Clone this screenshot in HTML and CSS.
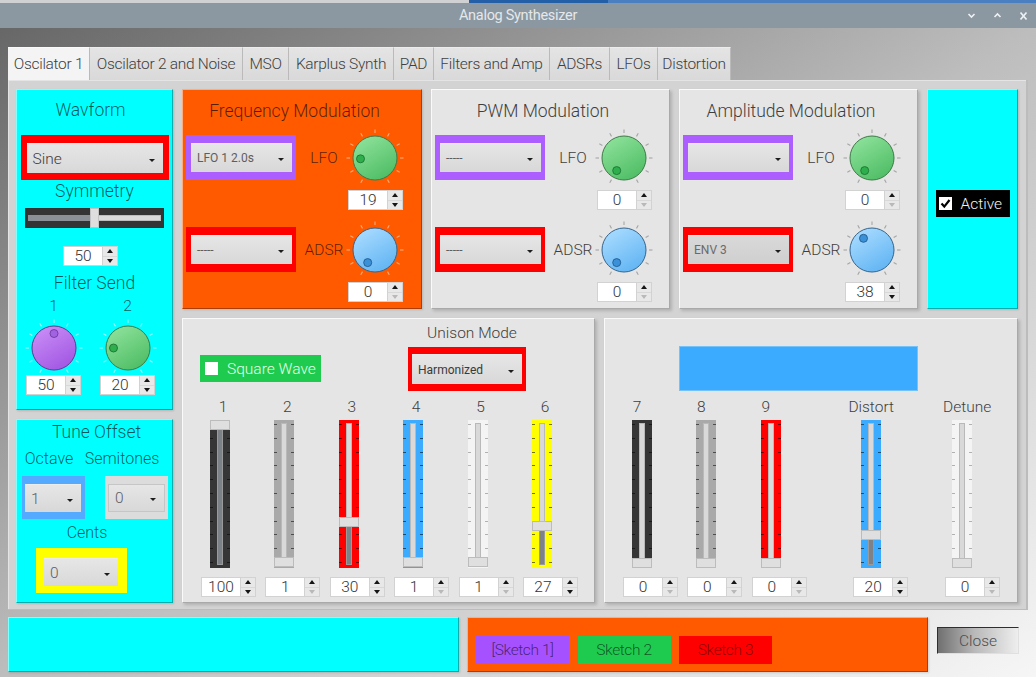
FILE: index.html
```html
<!DOCTYPE html>
<html lang="en">
<head>
<meta charset="utf-8">
<title>Analog Synthesizer</title>
<link rel="stylesheet" href="styles.css">
</head>
<body>
<svg class="defs" width="0" height="0" aria-hidden="true">
  <defs>
    <linearGradient id="gGreen" x1="0.2" y1="0" x2="0.8" y2="1">
      <stop offset="0" stop-color="#8ee29b"/><stop offset="1" stop-color="#4cbc63"/>
    </linearGradient>
    <linearGradient id="gBlue" x1="0.2" y1="0" x2="0.8" y2="1">
      <stop offset="0" stop-color="#aadcff"/><stop offset="1" stop-color="#5eb3f3"/>
    </linearGradient>
    <linearGradient id="gPurple" x1="0.2" y1="0" x2="0.8" y2="1">
      <stop offset="0" stop-color="#c98ef6"/><stop offset="1" stop-color="#a054e2"/>
    </linearGradient>
    <g id="ticks">
      <line x1="-12.5" y1="21.65" x2="-14.25" y2="24.68"/>
      <line x1="-21.65" y1="12.5" x2="-24.68" y2="14.25"/>
      <line x1="-25" y1="0" x2="-28.5" y2="0"/>
      <line x1="-21.65" y1="-12.5" x2="-24.68" y2="-14.25"/>
      <line x1="-12.5" y1="-21.65" x2="-14.25" y2="-24.68"/>
      <line x1="0" y1="-25" x2="0" y2="-28.5"/>
      <line x1="12.5" y1="-21.65" x2="14.25" y2="-24.68"/>
      <line x1="21.65" y1="-12.5" x2="24.68" y2="-14.25"/>
      <line x1="25" y1="0" x2="28.5" y2="0"/>
      <line x1="21.65" y1="12.5" x2="24.68" y2="14.25"/>
      <line x1="12.5" y1="21.65" x2="14.25" y2="24.68"/>
    </g>
  </defs>
</svg>

<div class="topstrip"></div>
<div class="titlebar">
  <span></span>
  <span class="wtitle">Analog Synthesizer</span>
  <span class="wctrls">
    <svg width="9" height="7" viewBox="0 0 9 7"><polyline points="1.5,2 4.5,5 7.5,2" fill="none" stroke="#eef1f3" stroke-width="1.6"/></svg>
    <svg width="9" height="7" viewBox="0 0 9 7"><polyline points="1.5,5 4.5,2 7.5,5" fill="none" stroke="#eef1f3" stroke-width="1.6"/></svg>
    <svg width="9" height="10" viewBox="0 0 9 10"><path d="M1.5 1.5 L7.5 8.5 M7.5 1.5 L1.5 8.5" fill="none" stroke="#eef1f3" stroke-width="1.7"/></svg>
  </span>
</div>

<div class="window">
  <div class="tabs">
    <div class="tab sel">Oscilator 1</div>
    <div class="tab">Oscilator 2 and Noise</div>
    <div class="tab">MSO</div>
    <div class="tab">Karplus Synth</div>
    <div class="tab">PAD</div>
    <div class="tab">Filters and Amp</div>
    <div class="tab">ADSRs</div>
    <div class="tab">LFOs</div>
    <div class="tab">Distortion</div>
  </div>

  <div class="pane">
    <div class="lcol">
      <div class="panel cyan wave">
        <div class="ptitle">Wavform</div>
        <div class="frame red wframe"><div class="combo"><span>Sine</span><i class="caret"></i></div></div>
        <div class="plabel">Symmetry</div>
        <div class="hs">
          <span class="hgroove"></span>
          <span class="hfill"></span>
          <span class="hhandle"></span>
        </div>
        <div class="spin wspin"><span class="v">50</span><span class="ar"><i class="u"></i><i class="d"></i></span></div>
        <div class="plabel fslabel">Filter Send</div>
        <div class="fs">
          <div class="num">1</div>
          <div class="num">2</div>
          <svg class="knob k-purple" viewBox="-30 -30 60 60"><use href="#ticks"/><circle class="kb" r="22"/><circle class="kd" cx="0" cy="-14.5" r="4"/></svg>
          <svg class="knob k-green" viewBox="-30 -30 60 60"><use href="#ticks"/><circle class="kb" r="22"/><circle class="kd" cx="-14.5" cy="0" r="4"/></svg>
          <div class="spin"><span class="v">50</span><span class="ar"><i class="u"></i><i class="d"></i></span></div>
          <div class="spin"><span class="v">20</span><span class="ar"><i class="u"></i><i class="d"></i></span></div>
        </div>
      </div>

      <div class="panel cyan tune">
        <div class="ptitle tt">Tune Offset</div>
        <div class="trow">
          <div class="tl oct">Octave</div>
          <div class="tl semi">Semitones</div>
        </div>
        <div class="tframes">
          <div class="frame blue oframe"><div class="combo dim"><span>1</span><i class="caret"></i></div></div>
          <div class="frame lgrey sframe"><div class="combo dim bordered"><span>0</span><i class="caret"></i></div></div>
        </div>
        <div class="tl cents">Cents</div>
        <div class="frame yellow cframe"><div class="combo dim"><span>0</span><i class="caret"></i></div></div>
      </div>
    </div>

    <div class="rarea">
      <div class="toprow">
        <div class="panel orange mod fm">
          <div class="ptitle mt">Frequency Modulation</div>
          <div class="mrow">
            <div class="frame purple mframe"><div class="combo small"><span>LFO 1 2.0s</span><i class="caret"></i></div></div>
            <div class="mlbl">LFO</div>
            <svg class="knob k-green" viewBox="-30 -30 60 60"><use href="#ticks"/><circle class="kb" r="22"/><circle class="kd" cx="-14.5" cy="0.8" r="4"/></svg>
          </div>
          <div class="spin mspin"><span class="v">19</span><span class="ar"><i class="u"></i><i class="d"></i></span></div>
          <div class="mrow second">
            <div class="frame red mframe"><div class="combo small"><span>-----</span><i class="caret"></i></div></div>
            <div class="mlbl">ADSR</div>
            <svg class="knob k-blue" viewBox="-30 -30 60 60"><use href="#ticks"/><circle class="kb" r="22"/><circle class="kd" cx="-7.3" cy="12.6" r="4"/></svg>
          </div>
          <div class="spin mspin"><span class="v">0</span><span class="ar"><i class="u"></i><i class="d off"></i></span></div>
        </div>

        <div class="panel grey mod">
          <div class="ptitle mt">PWM Modulation</div>
          <div class="mrow">
            <div class="frame purple mframe"><div class="combo small"><span>-----</span><i class="caret"></i></div></div>
            <div class="mlbl">LFO</div>
            <svg class="knob k-green" viewBox="-30 -30 60 60"><use href="#ticks"/><circle class="kb" r="22"/><circle class="kd" cx="-7.3" cy="12.6" r="4"/></svg>
          </div>
          <div class="spin mspin"><span class="v">0</span><span class="ar"><i class="u"></i><i class="d off"></i></span></div>
          <div class="mrow second">
            <div class="frame red mframe"><div class="combo small"><span>-----</span><i class="caret"></i></div></div>
            <div class="mlbl">ADSR</div>
            <svg class="knob k-blue" viewBox="-30 -30 60 60"><use href="#ticks"/><circle class="kb" r="22"/><circle class="kd" cx="-7.3" cy="12.6" r="4"/></svg>
          </div>
          <div class="spin mspin"><span class="v">0</span><span class="ar"><i class="u"></i><i class="d off"></i></span></div>
        </div>

        <div class="panel grey mod">
          <div class="ptitle mt">Amplitude Modulation</div>
          <div class="mrow">
            <div class="frame purple mframe"><div class="combo small"><span></span><i class="caret"></i></div></div>
            <div class="mlbl">LFO</div>
            <svg class="knob k-green" viewBox="-30 -30 60 60"><use href="#ticks"/><circle class="kb" r="22"/><circle class="kd" cx="-7.3" cy="12.6" r="4"/></svg>
          </div>
          <div class="spin mspin"><span class="v">0</span><span class="ar"><i class="u"></i><i class="d off"></i></span></div>
          <div class="mrow second">
            <div class="frame red mframe"><div class="combo small env"><span>ENV 3</span><i class="caret"></i></div></div>
            <div class="mlbl">ADSR</div>
            <svg class="knob k-blue" viewBox="-30 -30 60 60"><use href="#ticks"/><circle class="kb" r="22"/><circle class="kd" cx="-8.5" cy="-11.7" r="4"/></svg>
          </div>
          <div class="spin mspin"><span class="v">38</span><span class="ar"><i class="u"></i><i class="d"></i></span></div>
        </div>

        <div class="panel cyan active">
          <div class="chk">
            <span class="cbox"><svg width="13" height="13" viewBox="0 0 13 13"><polyline points="2.5,6.5 5.3,9.6 10.5,3" fill="none" stroke="#000" stroke-width="2.2"/></svg></span>
            <span>Active</span>
          </div>
        </div>
      </div>

      <div class="botrow">
        <div class="panel grey lower">
          <div class="uhead">
            <div class="sqw"><span class="cbox"></span><span>Square Wave</span></div>
            <div class="unison">
              <div class="ulbl">Unison Mode</div>
              <div class="frame red uframe"><div class="combo small dark"><span>Harmonized</span><i class="caret"></i></div></div>
            </div>
          </div>
          <div class="cols">
            <div class="col">
              <div class="lbl">1</div>
              <div class="vs c-dark"><span class="groove"></span><span class="fill" style="top:9px"></span><span class="handle" style="top:0px"></span></div>
              <div class="spin"><span class="v">100</span><span class="ar"><i class="u"></i><i class="d"></i></span></div>
            </div>
            <div class="col">
              <div class="lbl">2</div>
              <div class="vs c-grey"><span class="groove"></span><span class="handle" style="top:136.6px"></span></div>
              <div class="spin"><span class="v">1</span><span class="ar"><i class="u"></i><i class="d off"></i></span></div>
            </div>
            <div class="col">
              <div class="lbl">3</div>
              <div class="vs c-red"><span class="groove"></span><span class="fill" style="top:105.6px"></span><span class="handle" style="top:96.6px"></span></div>
              <div class="spin"><span class="v">30</span><span class="ar"><i class="u"></i><i class="d"></i></span></div>
            </div>
            <div class="col">
              <div class="lbl">4</div>
              <div class="vs c-blue"><span class="groove"></span><span class="handle" style="top:136.6px"></span></div>
              <div class="spin"><span class="v">1</span><span class="ar"><i class="u"></i><i class="d off"></i></span></div>
            </div>
            <div class="col">
              <div class="lbl">5</div>
              <div class="vs c-white"><span class="groove"></span><span class="handle" style="top:136.6px"></span></div>
              <div class="spin"><span class="v">1</span><span class="ar"><i class="u"></i><i class="d off"></i></span></div>
            </div>
            <div class="col">
              <div class="lbl">6</div>
              <div class="vs c-yellow"><span class="groove"></span><span class="fill" style="top:109.7px"></span><span class="handle" style="top:100.7px"></span></div>
              <div class="spin"><span class="v">27</span><span class="ar"><i class="u"></i><i class="d"></i></span></div>
            </div>
          </div>
        </div>

        <div class="panel grey lower right">
          <div class="uhead">
            <div class="bluebar"></div>
          </div>
          <div class="cols">
            <div class="col">
              <div class="lbl narrow">7</div>
              <div class="vs c-dark"><span class="groove"></span><span class="handle" style="top:138px"></span></div>
              <div class="spin"><span class="v">0</span><span class="ar"><i class="u"></i><i class="d off"></i></span></div>
            </div>
            <div class="col">
              <div class="lbl narrow">8</div>
              <div class="vs c-grey"><span class="groove"></span><span class="handle" style="top:138px"></span></div>
              <div class="spin"><span class="v">0</span><span class="ar"><i class="u"></i><i class="d off"></i></span></div>
            </div>
            <div class="col">
              <div class="lbl narrow">9</div>
              <div class="vs c-red"><span class="groove"></span><span class="handle" style="top:138px"></span></div>
              <div class="spin"><span class="v">0</span><span class="ar"><i class="u"></i><i class="d off"></i></span></div>
            </div>
            <div class="col distort">
              <div class="lbl mid">Distort</div>
              <div class="vs c-blue"><span class="groove"></span><span class="fill" style="top:119.4px"></span><span class="handle" style="top:110.4px"></span></div>
              <div class="spin"><span class="v">20</span><span class="ar"><i class="u"></i><i class="d"></i></span></div>
            </div>
            <div class="col detune">
              <div class="lbl">Detune</div>
              <div class="vs c-white"><span class="groove"></span><span class="handle" style="top:138px"></span></div>
              <div class="spin"><span class="v">0</span><span class="ar"><i class="u"></i><i class="d off"></i></span></div>
            </div>
          </div>
        </div>
      </div>
    </div>
  </div>

  <div class="bottom">
    <div class="panel cyan bcyan"></div>
    <div class="panel orange borange">
      <div class="sk sk1">[Sketch 1]</div>
      <div class="sk sk2">Sketch 2</div>
      <div class="sk sk3">Sketch 3</div>
    </div>
    <div class="closebtn">Close</div>
  </div>
</div>
</body>
</html>
```

FILE: styles.css
```css
* { box-sizing: border-box; margin: 0; padding: 0; }
html, body { width: 1036px; height: 677px; overflow: hidden; }
body {
  font-family: Roboto, "Noto Sans", "Liberation Sans", sans-serif;
  font-weight: 300;
  color: #444;
  background: #8b97a1;
}
.defs { display: block; width: 0; height: 0; overflow: hidden; }

/* title bar */
.topstrip {
  height: 3px;
  background: linear-gradient(to right, #cfd1d2 0 469px, #235fa6 469px 608px, #4a7fc1 608px);
}
.titlebar {
  height: 25px;
  background: #8b97a1;
  display: grid;
  grid-template-columns: 1fr auto 1fr;
  align-items: center;
}
.wtitle { color: #e4e8eb; font-size: 14.5px; font-weight: 400; letter-spacing: -0.3px; }
.wctrls { justify-self: end; display: flex; align-items: center; gap: 17px; padding-right: 8px; }
.wctrls svg { display: block; }

/* window */
.window {
  height: 649px;
  padding: 19px 8px 0 8px;
  background: linear-gradient(to bottom right, #676767 0%, #bdbdbd 50%, #f6f6f6 100%);
}
.tabs { display: flex; height: 33px; }
.tab {
  flex: none;
  display: flex;
  align-items: center;
  justify-content: center;
  font-size: 15.5px;
  letter-spacing: -0.3px;
  color: #404040;
  background: linear-gradient(#e4e4e4, #d9d9d9);
  border-top: 1px solid #ececec;
  border-right: 1px solid #bababa;
}
.tab:nth-child(1) { width: 82px; }
.tab:nth-child(2) { width: 153px; }
.tab:nth-child(3) { width: 46px; }
.tab:nth-child(4) { width: 105px; }
.tab:nth-child(5) { width: 40px; }
.tab:nth-child(6) { width: 116px; }
.tab:nth-child(7) { width: 60px; }
.tab:nth-child(8) { width: 48px; }
.tab:nth-child(9) { width: 73px; }
.tab.sel { background: #f4f4f4; border-top-color: #fafafa; }

.pane {
  height: 530px;
  background: #d3d3d3;
  display: flex;
  gap: 9px;
  padding: 9px 8px 0 8px;
  box-shadow: inset -2px -1px 0 #bcbcbc, inset 1px 1px 0 #e4e4e4;
}

/* panels */
.panel {
  border: 1px solid;
  border-color: rgba(255,255,255,.5) rgba(0,0,0,.32) rgba(0,0,0,.32) rgba(255,255,255,.5);
  box-shadow: 1px 1px 2px rgba(0,0,0,.14);
}
.cyan { background: #00ffff; --tick: rgba(255,255,255,.6); }
.orange { background: #ff5a00; --tick: rgba(255,225,200,.6); }
.grey { background: #e5e5e5; --tick: rgba(0,0,0,.28); border-color: #fafafa #a9a9a9 #a9a9a9 #fafafa; box-shadow: 2px 2px 3px rgba(0,0,0,.16); }

.ptitle { font-size: 17.5px; color: rgba(0,0,0,.66); text-align: center; }
.grey .ptitle, .grey .mlbl, .grey .lbl, .grey .ulbl { color: #3e3e3e; }
.plabel { font-size: 17.5px; color: rgba(0,0,0,.66); height: 22px; line-height: 22px; text-align: center; }

.lcol { width: 157px; display: flex; flex-direction: column; gap: 9px; }
.rarea { width: 836px; display: flex; flex-direction: column; gap: 9px; }
.toprow { display: flex; gap: 9px; height: 220px; }
.botrow { display: flex; gap: 9px; height: 285px; }

/* frames & combos */
.frame { display: flex; }
.red { background: #ff0000; }
.purple { background: #ad5eff; }
.blue { background: #54aaff; }
.lgrey { background: #dcdcdc; }
.yellow { background: #ffff00; }
.combo {
  flex: 1;
  display: flex;
  align-items: center;
  justify-content: space-between;
  padding: 0 8px 0 6px;
  background: linear-gradient(#e6e6e6, #d8d8d8);
  border-top: 1px solid #ececec;
  font-size: 15.5px;
  color: #3c3c3c;
}
.combo.small { font-size: 12px; color: #5e5e5e; font-weight: 400; }
.combo.small.dark { color: #3a3a3a; }
.combo.env { background: linear-gradient(#d9d9d9, #cfcfcf); color: #6a6a6a; }
.combo.dim { color: #5e5e5e; }
.combo.bordered { border: 1px solid #c6c6c6; }
.caret {
  width: 0; height: 0;
  border-left: 3px solid transparent;
  border-right: 3px solid transparent;
  border-top: 3.5px solid #1c1c1c;
  margin-top: 3px;
}

/* spin boxes */
.spin {
  display: flex;
  width: 55px;
  height: 20px;
  background: #fff;
  border: 1px solid #d2d2d2;
  flex: none;
}
.spin .v { flex: 1; text-align: center; font-size: 15.5px; line-height: 18px; color: #333; }
.spin .ar { width: 15px; display: flex; flex-direction: column; background: #e8e8e8; border-left: 1px solid #d2d2d2; }
.spin .ar i { flex: 1; display: flex; align-items: center; justify-content: center; }
.spin .ar .u { border-bottom: 1px solid #d8d8d8; }
.spin .ar i::before { content: ""; width: 0; height: 0; border-left: 3.5px solid transparent; border-right: 3.5px solid transparent; }
.spin .ar .u::before { border-bottom: 4px solid #151515; }
.spin .ar .d::before { border-top: 4px solid #151515; }
.spin .ar .d.off::before { border-top-color: #b9b9b9; }

/* knobs */
.knob { width: 60px; height: 60px; margin: -7px; display: block; overflow: visible; flex: none; }
.knob use { stroke: var(--tick); stroke-width: 1.1; }
.knob .kb { stroke-width: 1; }
.knob .kd { stroke-width: 0.9; }
.k-green .kb { fill: url(#gGreen); stroke: #3d7a47; }
.k-green .kd { fill: #2fae4d; stroke: #1e7433; }
.k-blue .kb { fill: url(#gBlue); stroke: #35648c; }
.k-blue .kd { fill: #3b91d8; stroke: #235a8c; }
.k-purple .kb { fill: url(#gPurple); stroke: #5f3a8c; }
.k-purple .kd { fill: #a263e2; stroke: #6b3aa2; }

/* waveform panel */
.wave { height: 321px; display: flex; flex-direction: column; align-items: center; }
.wave .ptitle { height: 40px; line-height: 40px; width: 100%; padding-right: 8px; }
.wframe { width: 148px; height: 45px; margin-top: 5px; padding: 8px 6px 7px 6px; }
.hs { position: relative; width: 139px; height: 20px; margin-top: 6px; background: #343434; flex: none; }
.hgroove { position: absolute; left: 3px; right: 3px; top: 7px; height: 6px; background: #dadada; border: 1px solid #bdbdbd; }
.hfill { position: absolute; left: 3px; width: 62px; top: 7px; height: 6px; background: #8b9096; }
.hhandle { position: absolute; left: 65px; top: 0; width: 9px; height: 20px; background: #dedede; border: 1px solid #c2c2c2; }
.wspin { margin-top: 18px; margin-right: 8px; }
.fslabel { margin-top: 6px; }
.fs {
  align-self: flex-start;
  margin: 2px 0 0 9px;
  display: grid;
  grid-template-columns: 55px 55px;
  grid-template-rows: 20px 46px 20px;
  column-gap: 19px;
  row-gap: 0;
  justify-items: center;
}
.fs .num { font-size: 15.5px; line-height: 20px; color: rgba(0,0,0,.66); }
.fs .knob { margin-top: 2px; margin-bottom: -16px; }
.fs .spin { margin-top: 13px; }

/* tune panel */
.tune { height: 184px; display: flex; flex-direction: column; }
.tune .tt { height: 25px; line-height: 25px; padding-left: 4px; }
.trow { display: flex; margin-top: 3px; }
.tl { font-size: 16px; color: rgba(0,0,0,.66); height: 22px; line-height: 22px; text-align: center; white-space: nowrap; }
.tl.oct { width: 64px; }
.tl.semi { width: 82px; }
.tframes { display: flex; gap: 20px; margin: 6px 0 0 5px; }
.oframe { width: 63px; height: 43px; padding: 8px 4px 7px 3px; }
.sframe { width: 63px; height: 43px; padding: 8px 3px 7px 3px; }
.tl.cents { width: 62px; margin: 3px 0 0 39px; }
.cframe { width: 91px; height: 45px; margin: 4px 0 0 19px; padding: 10px 9px 7px 8px; }

/* modulation panels */
.mod { width: 239px; display: flex; flex-direction: column; padding-left: 3px; }
.fm { width: 240px; }
.mt { height: 42px; line-height: 42px; padding-right: 18px; }
.mrow { display: flex; align-items: center; height: 45px; margin-top: 3px; }
.mrow.second { margin-top: 17px; }
.mframe { width: 110px; height: 45px; padding: 8px 4px 8px 5px; }
.mlbl { width: 56px; text-align: center; font-size: 15.5px; color: rgba(0,0,0,.66); }
.mspin { margin: 10px 0 0 162px; }

/* active */
.active { width: 91px; display: flex; align-items: center; justify-content: center; padding-top: 9px; }
.chk { display: flex; align-items: center; gap: 9px; width: 74px; height: 27px; background: #000; padding-left: 3px; color: #f2f2f2; font-size: 15.5px; }
.cbox { width: 13px; height: 13px; background: #fff; display: block; flex: none; }
.cbox svg { display: block; }

/* lower panels */
.lower { width: 413px; display: flex; flex-direction: column; }
.lower.right { width: 414px; }
.uhead { display: flex; height: 79px; flex: none; }
.sqw {
  display: flex; align-items: center; gap: 9px;
  width: 121px; height: 27px;
  margin: 36px 0 0 17px;
  padding-left: 5px;
  background: #1fcb4f;
  color: #e4ffe9;
  font-size: 15.5px;
}
.unison { display: flex; flex-direction: column; width: 118px; margin-left: 87px; }
.ulbl { height: 26px; line-height: 26px; margin-top: 1px; font-size: 15.5px; text-align: center; padding-left: 10px; white-space: nowrap; }
.uframe { height: 44px; margin-top: 1px; padding: 7px 4px 7px 4px; }
.bluebar { width: 239px; height: 45px; margin: 27px 0 0 74px; background: #3aabff; border: 1px solid #74c2f7; }

.cols { display: flex; gap: 9.4px; padding-left: 18px; }
.col { width: 55px; display: flex; flex-direction: column; align-items: flex-start; }
.col .lbl { height: 18px; width: 44px; display: flex; justify-content: center; align-items: center; font-size: 15.5px; white-space: nowrap; }
.col .lbl.narrow { width: 28px; }
.col .lbl.mid { width: 36px; }
.col.distort { margin-left: 37px; }
.col.detune { margin-left: 27.6px; }
.col .spin { margin-top: 9px; }

.vs {
  position: relative;
  width: 20px;
  height: 148px;
  margin: 4px 0 0 9px;
  flex: none;
}
.col.distort .vs { margin-left: 8px; }
.col.detune .vs { margin-left: 7px; }
.vs::before {
  content: "";
  position: absolute;
  left: 0; right: 0; top: 4px; height: 140px;
  background-image:
    repeating-linear-gradient(to bottom, rgba(0,0,0,.55) 0 1px, transparent 1px 13.8px),
    repeating-linear-gradient(to bottom, rgba(0,0,0,.55) 0 1px, transparent 1px 13.8px);
  background-size: 3px 140px, 3px 140px;
  background-position: 0 0, 17px 0;
  background-repeat: no-repeat;
}
.c-dark { background: #363636; }
.c-dark::before { filter: brightness(0); }
.c-grey { background: #a9a9a9; }
.c-red { background: #ff0000; }
.c-blue { background: #3aabff; }
.c-white { background: #f4f4f4; }
.c-yellow { background: #ffff00; }
.c-white::before { opacity: .5; }
.groove { position: absolute; left: 7px; width: 6px; top: 3px; bottom: 3px; background: #d9d9d9; border: 1px solid #b9b9b9; }
.fill { position: absolute; left: 7px; width: 6px; bottom: 3px; background: #7d8288; border: 1px solid #9a9a9a; }
.handle { position: absolute; left: 0; width: 20px; height: 10px; background: #dfdfdf; border: 1px solid #bcbcbc; }

/* bottom row */
.bottom { display: flex; padding-top: 7px; height: 62px; }
.bcyan { width: 451px; height: 55px; }
.borange {
  width: 461px; height: 55px;
  margin-left: 8px;
  display: flex;
  gap: 8.5px;
  padding: 18px 0 0 8px;
}
.sk { width: 93px; height: 28px; display: flex; align-items: center; justify-content: center; font-size: 15.5px; color: rgba(0,0,0,.58); letter-spacing: -0.4px; }
.sk1 { background: #a551ff; }
.sk2 { background: #1fcb4f; }
.sk3 { background: #ff0000; color: rgba(120,0,0,.85); }
.closebtn {
  width: 82px; height: 27px;
  margin: 10px 0 0 9px;
  display: flex; align-items: center; justify-content: center;
  background: linear-gradient(to right, #707070, #b8b8b8 45%, #eeeeee);
  border: 1px solid;
  border-color: #2e2e2e #e0e0e0 #e0e0e0 #2e2e2e;
  color: #4e4e4e;
  font-size: 15.5px;
}
```
